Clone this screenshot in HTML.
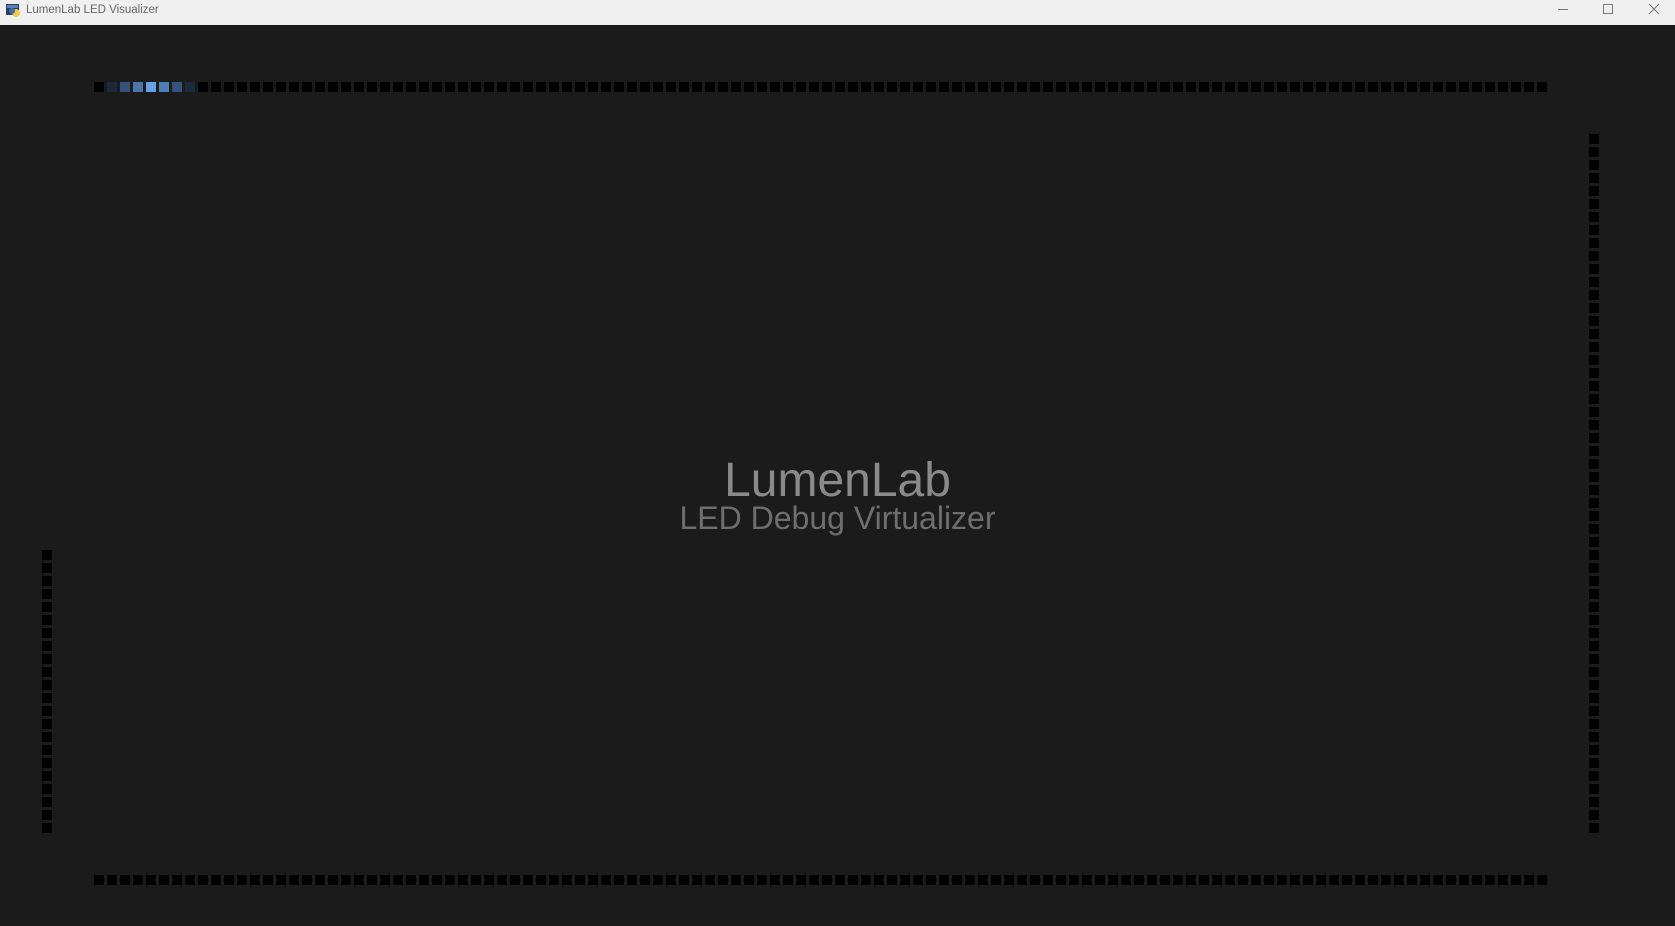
<!DOCTYPE html>
<html><head><style>
body{margin:0;width:1675px;height:926px;background:#1b1b1b;overflow:hidden;position:relative;font-family:"Liberation Sans",sans-serif}
.tb{position:absolute;left:0;top:0;width:1675px;height:25px;background:#f0f0f0}
.tt{position:absolute;left:26px;top:4px;font-size:11.5px;color:#666}
.l{position:absolute;width:10px;height:10px;background:#000}
.t1{position:absolute;left:0;width:1675px;text-align:center;color:#8a8a8a;font-size:48px;top:453px;line-height:56px}
.t2{position:absolute;left:0;width:1675px;text-align:center;color:#6e6e6e;font-size:32px;top:500px;line-height:36px}
</style></head><body>
<div class="tb">
<svg style="position:absolute;left:6px;top:3px" width="15" height="15" viewBox="0 0 15 15"><rect x="0" y="1" width="13" height="11" fill="#2b3e5c"/><rect x="1" y="2" width="11" height="3" fill="#5a7fb5"/><circle cx="10" cy="10" r="4" fill="#f2c94c"/><circle cx="6" cy="8" r="3" fill="#3a6ea5"/></svg>
<div class="tt">LumenLab LED Visualizer</div>
<svg style="position:absolute;left:1556px;top:0px" width="110" height="18" viewBox="0 0 110 18"><line x1="2" y1="9.5" x2="12" y2="9.5" stroke="#777" stroke-width="1"/><rect x="47.5" y="4.5" width="9" height="9" fill="none" stroke="#777"/><path d="M93 4 L103 14 M103 4 L93 14" stroke="#777" stroke-width="1"/></svg>
</div>
<div class="t1">LumenLab</div>
<div class="t2">LED Debug Virtualizer</div>
<div id="leds"></div>
<script>
var h='',c={1:'#1b2a3d',2:'#34527a',3:'#4a76aa',4:'#68a0e8',5:'#4d7db5',6:'#34527a',7:'#1b2a3d'};
for(var i=0;i<112;i++){h+='<div class="l" style="left:'+(94+13*i)+'px;top:82px'+(c[i]?';background:'+c[i]:'')+'"></div>';h+='<div class="l" style="left:'+(94+13*i)+'px;top:875px"></div>';}
for(var i=0;i<54;i++)h+='<div class="l" style="left:1589px;top:'+(134+13*i)+'px"></div>';
for(var i=0;i<22;i++)h+='<div class="l" style="left:42px;top:'+(550+13*i)+'px"></div>';
document.getElementById('leds').innerHTML=h;
</script>
</body></html>
